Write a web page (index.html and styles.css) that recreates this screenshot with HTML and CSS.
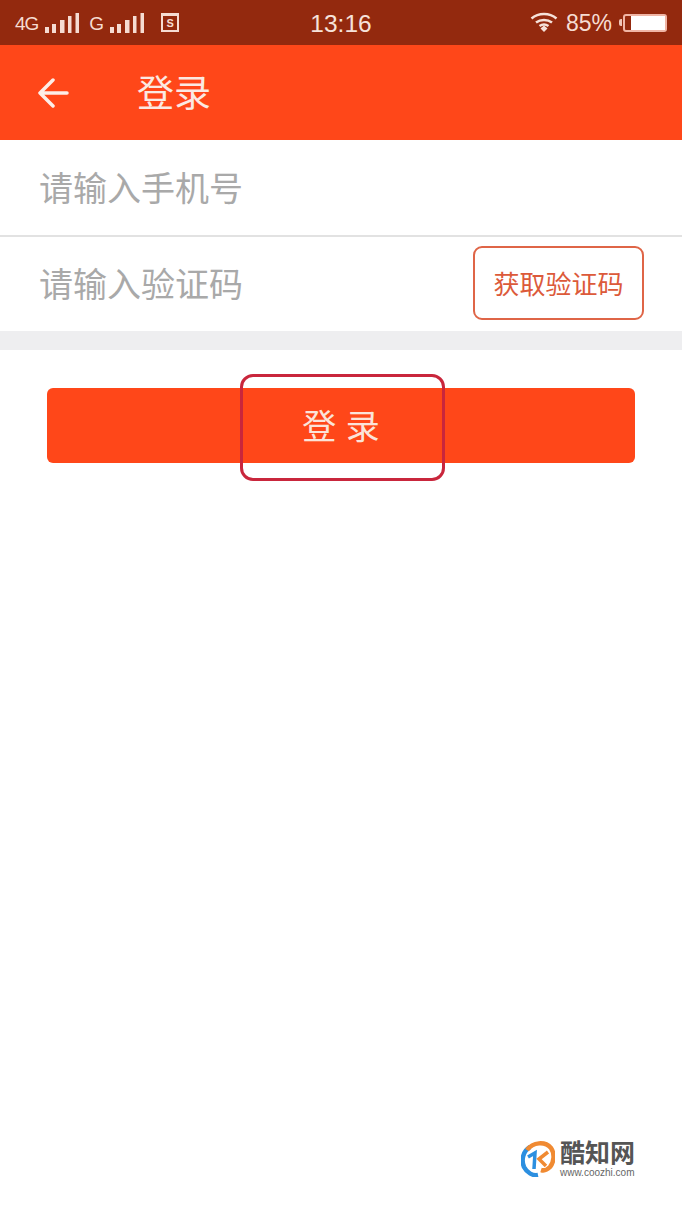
FILE: index.html

```html
<!DOCTYPE html>
<html lang="zh-CN">

<head>
    <meta charset="UTF-8">
    <meta name="viewport" content="width=device-width, initial-scale=1.0">
    <title>登录</title>
    <link rel="stylesheet" href="styles.css">
</head>

<body>
    <div class="phone">
        <div class="status">
            <div class="status-left">
                <span class="net">4G</span>
                <svg class="bars" width="35" height="22" viewBox="0 0 35 22">
                    <path d="M1 15h4v6H1zM8 12h4v9H8zM16 8h4.500v13H16zM24 4h3.500v17H24zM31.500 1H35v20h-3.500z" />
                </svg>
                <span class="net net-g">G</span>
                <svg class="bars" width="35" height="22" viewBox="0 0 35 22">
                    <path d="M1 15h4v6H1zM8 12h4v9H8zM16 8h4.500v13H16zM24 4h3.500v17H24zM31.500 1H35v20h-3.500z" />
                </svg>
                <span class="sim">S</span>
            </div>
            <div class="clock">13:16</div>
            <div class="status-right">
                <svg class="wifi" width="28" height="20" viewBox="0 0 28 20">
                    <path d="M1.500 6.500C8.500 .5 19.500 .5 26.500 6.500M6 10.500C10.500 7 17.500 7 22 10.500M9.500 14C12.500 12 15.500 12 18.500 14" />
                    <path class="wifi-dot" d="M10.500 16.500L14 13.500l3.500 3L14 20z" />
                </svg>
                <span class="percent">85%</span>
                <div class="nub"></div>
                <div class="battery">
                    <div class="battery-fill"></div>
                </div>
            </div>
        </div>

        <div class="header">
            <svg class="back" width="32" height="30" viewBox="0 0 32 30">
                <path d="M30 15H3M16 2L3 15l13 13" />
            </svg>
            <div class="title">登录</div>
        </div>

        <div class="form">
            <div class="row row-line">
                <span class="hint">请输入手机号</span>
            </div>
            <div class="row row-code">
                <span class="hint">请输入验证码</span>
                <div class="code-btn">获取验证码</div>
            </div>
        </div>
        <div class="gap"></div>

        <div class="login-wrap">
            <div class="login-btn">登 录</div>
            <div class="mark"></div>
        </div>

        <div class="logo">
            <svg width="34" height="36" viewBox="0 0 34 36">
                <path class="logo-blue" d="M9 6C2 10 0 19 3 26c3 6 9 9 14 8" />
                <path class="logo-blue thin" d="M7 16l7-4-1 16" />
                <path class="logo-orange" d="M6 9C12 1 24 0 30 7c4 6 3 14-1 19-3 3-6 4-9 3" />
                <path class="logo-orange thin" d="M27 11l-9 7 7 7" />
            </svg>
            <div class="logo-text">
                <div class="logo-name">酷知网</div>
                <div class="logo-url">www.coozhi.com</div>
            </div>
        </div>
    </div>
</body>

</html>
```

FILE: styles.css

```css
body {
    margin: 0;
    padding: 0;
    background: #fff;
    font-family: "Liberation Sans", "Noto Sans CJK SC", sans-serif;
}

.phone {
    width: 682px;
    height: 1212px;
    position: relative;
    overflow: hidden;
    background: #fff;
}

.status {
    height: 45px;
    background: #93290e;
    color: #f6dcd2;
    display: grid;
    grid-template-columns: 1fr auto 1fr;
    align-items: center;
    padding: 0 15px;
    box-sizing: border-box;
}

.status-left,
.status-right {
    display: flex;
    align-items: center;
}

.status-right {
    justify-content: flex-end;
}

.net {
    font-size: 19px;
    letter-spacing: -1px;
    padding-top: 3px;
}

.net-g {
    margin-left: 10px;
}

.bars {
    fill: #f6dcd2;
    margin-left: 6px;
}

.net-g + .bars {
    margin-left: 6px;
}

.sim {
    width: 14px;
    height: 14px;
    border: 2px solid #f6dcd2;
    border-top-width: 3px;
    margin-left: 17px;
    font-size: 11px;
    font-weight: 700;
    line-height: 14px;
    text-align: center;
}

.clock {
    font-size: 24.500px;
    color: #f6e2da;
    padding-top: 2px;
}

.wifi {
    margin-right: 8px;
    margin-bottom: 2px;
}

.wifi path {
    fill: none;
    stroke: #f6e2da;
    stroke-width: 2.500;
}

.wifi .wifi-dot {
    fill: #f6e2da;
    stroke: none;
}

.percent {
    font-size: 23px;
    margin-right: 7px;
    padding-top: 2px;
}

.nub {
    width: 3px;
    height: 7px;
    background: #f0c5b8;
    border-radius: 2px 0 0 2px;
}

.battery {
    width: 44px;
    height: 18px;
    border: 2px solid #f0b5a5;
    border-radius: 3px;
    box-sizing: border-box;
    display: flex;
    justify-content: flex-end;
    margin-left: 1px;
}

.battery-fill {
    width: 34px;
    background: #fff;
}

.header {
    height: 95px;
    background: #ff4719;
    display: flex;
    align-items: center;
    padding-left: 37px;
    box-sizing: border-box;
}

.back {
    fill: none;
    stroke: #fdeee8;
    stroke-width: 3.500;
    stroke-linecap: round;
    stroke-linejoin: round;
}

.title {
    margin-left: 68px;
    margin-bottom: 4px;
    font-size: 37px;
    color: #fbe9e2;
}

.row {
    height: 94px;
    display: flex;
    align-items: center;
    justify-content: space-between;
    padding: 0 38px 0 39px;
    box-sizing: border-box;
}

.row-line {
    height: 97px;
    border-bottom: 2px solid #e2e2e2;
    padding-bottom: 1px;
}

.row-code {
    padding-bottom: 2px;
}

.hint {
    font-size: 34px;
    color: #a9a9a9;
    margin-bottom: 2px;
}

.code-btn {
    width: 171px;
    height: 74px;
    border: 2px solid #df6547;
    border-radius: 9px;
    box-sizing: border-box;
    color: #dc5a3a;
    font-size: 26px;
    line-height: 74px;
    text-align: center;
}

.gap {
    height: 19px;
    background: #eeeef0;
}

.login-wrap {
    position: relative;
    padding: 38px 47px 0;
}

.login-btn {
    height: 75px;
    background: #ff4719;
    border-radius: 6px;
    color: #fbe3d9;
    font-size: 34px;
    line-height: 79px;
    text-align: center;
}

.mark {
    position: absolute;
    left: 240px;
    top: 24px;
    width: 205px;
    height: 107px;
    border: 3px solid #c9263c;
    border-radius: 13px;
    box-sizing: border-box;
}

.logo {
    position: absolute;
    left: 521px;
    top: 1140px;
    display: flex;
    align-items: flex-start;
    gap: 5px;
}

.logo svg {
    fill: none;
    stroke-width: 4.500;
    margin-top: 1px;
}

.logo svg .thin {
    stroke-width: 3.500;
}

.logo-blue {
    stroke: #2c8fe0;
}

.logo-orange {
    stroke: #f08a32;
}

.logo-name {
    font-size: 25px;
    line-height: 27px;
    font-weight: 700;
    color: #555;
}

.logo-url {
    font-size: 10px;
    line-height: 11px;
    color: #666;
    white-space: nowrap;
}
```
